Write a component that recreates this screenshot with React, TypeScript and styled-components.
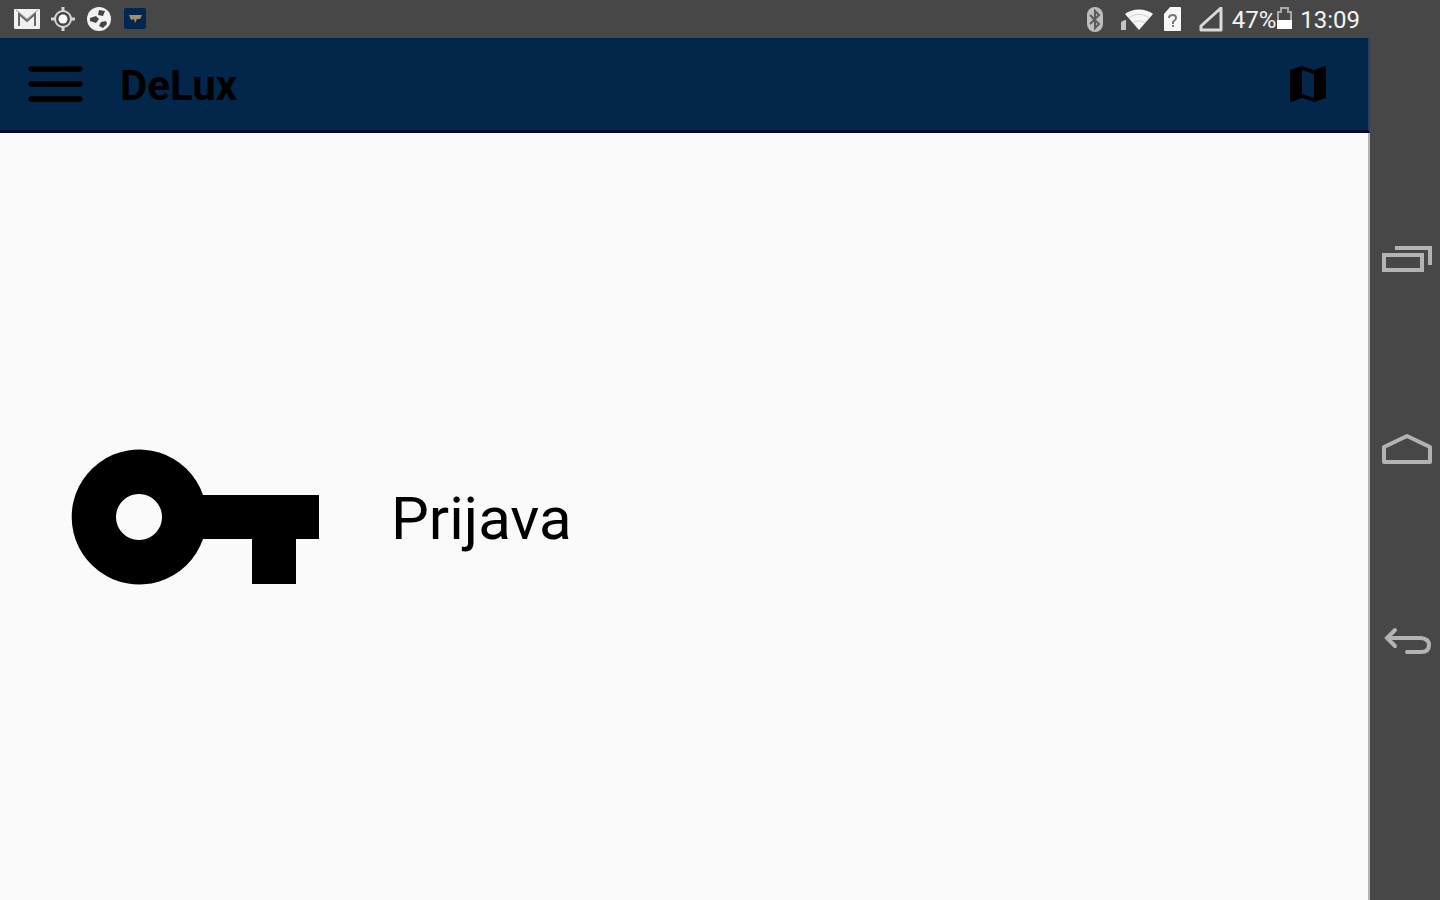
import React from "react";
import styled, { createGlobalStyle } from "styled-components";

const GlobalStyle = createGlobalStyle`
  * { box-sizing: border-box; }
  body {
    margin: 0;
    background: #474748;
    font-family: Roboto, "Noto Sans", sans-serif;
  }
`;

const Screen = styled.div`
  display: flex;
  min-height: 100vh;
  background: #474748;
`;

const AppColumn = styled.div`
  flex: 1;
  min-width: 0;
  display: flex;
  flex-direction: column;
`;

const StatusBar = styled.div`
  display: flex;
  justify-content: space-between;
  align-items: center;
  height: 38px;
  padding: 2px 10px 0 14px;
  color: #f4f4f4;
`;

const Notifications = styled.div`
  display: flex;
  align-items: center;
  gap: 10px;
`;

const SystemStatus = styled.div`
  display: flex;
  align-items: center;
`;

const StatusIcon = styled.svg<{ $gap?: number }>`
  display: block;
  flex: none;
  margin-right: ${(p) => p.$gap ?? 0}px;
`;

const StatusText = styled.span`
  font-size: 24px;
  line-height: 36px;
`;

const AppBar = styled.header`
  display: flex;
  align-items: center;
  height: 95px;
  padding: 0 36px 0 28px;
  background: #03264b;
  border-bottom: 3px solid #020a30;
  border-right: 2px solid #25415f;
`;

const IconButton = styled.button`
  display: flex;
  align-items: center;
  justify-content: center;
  padding: 0;
  border: 0;
  background: transparent;
  color: #000;
  cursor: pointer;
`;

const Title = styled.h1`
  flex: 1;
  margin: 0;
  padding: 4px 0 0 37px;
  font-size: 42px;
  line-height: 48px;
  font-weight: 700;
  color: #000;
`;

const Content = styled.main`
  flex: 1;
  display: flex;
  align-items: center;
  padding: 0 71px;
  background: #fafafa;
  border-right: 2px solid #b4b4b5;
`;

const LoginButton = styled(IconButton)`
  gap: 72px;
  font-family: inherit;
  font-size: 60px;
  line-height: 72px;
`;

const LoginLabel = styled.span`
  padding-top: 4px;
`;

const NavRail = styled.nav`
  flex: none;
  display: flex;
  flex-direction: column;
  justify-content: center;
  width: 70px;
`;

const NavButton = styled(IconButton)`
  height: 191px;
  padding-left: 4px;
`;

const line = { fill: "none", stroke: "#b3b3b4", strokeWidth: 4 };

export default function App() {
  return (
    <>
      <GlobalStyle />
      <Screen>
        <AppColumn>
          <StatusBar>
            <Notifications>
              <StatusIcon width="26" height="26" viewBox="0 0 26 26">
                <rect x="0" y="2" width="26" height="20" rx="1" fill="#f1f1f1" />
                <path d="M5 19V7l8 7 8-7v12" fill="none" stroke="#666" strokeWidth="2" />
                <path d="M2 3l11 9 11-9" fill="none" stroke="#9a9a9a" strokeWidth="1" />
              </StatusIcon>
              <StatusIcon width="26" height="26" viewBox="0 0 26 26">
                <circle cx="13" cy="12" r="8" fill="none" stroke="#d6d6d6" strokeWidth="2" />
                <circle cx="13" cy="12" r="4.500" fill="#fff" />
                <path d="M13 0v5M13 19v5M1 12h5M20 12h5" stroke="#d6d6d6" strokeWidth="3" />
              </StatusIcon>
              <StatusIcon width="26" height="26" viewBox="0 0 26 26">
                <circle cx="13" cy="12" r="12" fill="#f2f2f2" />
                <path d="M13 3l6 1-2 5-5-1zM4 11l6-2 3 3-3 4-6-2zM15 15l5-1 1 3-4 4-4-2z" fill="#444" />
              </StatusIcon>
              <StatusIcon width="26" height="26" viewBox="0 0 26 26">
                <rect x="2" y="1" width="22" height="21" rx="2" fill="#03264f" />
                <path d="M7 8h13l-2 4h-3l-2 4-1-4-3 1z" fill="#a38f62" />
              </StatusIcon>
            </Notifications>
            <SystemStatus>
              <StatusIcon $gap={17} width="18" height="26" viewBox="0 0 18 26">
                <rect x="1" y="0" width="16" height="25" rx="8" fill="#bdbdbd" />
                <path d="M4 8l9 9-4 4V4l4 4-9 9" fill="none" stroke="#5b5b5c" strokeWidth="2" />
              </StatusIcon>
              <StatusIcon $gap={10} width="32" height="26" viewBox="0 0 32 26">
                <path d="M4 7C11 1 25 1 32 7L18 23z" fill="#f7f7f7" />
                <path d="M8 11c6-5 14-5 20 0M12 16c4-3 8-3 12 0" fill="none" stroke="#cfcfcf" />
                <path d="M0 16q0-2 5-3v10H0z" fill="#c4c4c4" />
              </StatusIcon>
              <StatusIcon $gap={16} width="19" height="26" viewBox="0 0 19 26">
                <path d="M7 0h10q1 0 1 1v22q0 1-1 1H2q-1 0-1-1V7z" fill="#f7f7f7" />
                <path d="M6 11q0-3 4-3 3 0 3 3 0 2-3 4v2M10 18v2" fill="none" stroke="#777" strokeWidth="2" />
              </StatusIcon>
              <StatusIcon $gap={8} width="26" height="26" viewBox="0 0 26 26">
                <path d="M23 1v22H3v-4z" fill="none" stroke="#dadada" strokeWidth="3" strokeLinejoin="round" />
              </StatusIcon>
              <StatusText>47%</StatusText>
              <StatusIcon $gap={7} width="17" height="26" viewBox="0 0 17 26">
                <path d="M2 14V5h3V1h7v4h3v9" fill="none" stroke="#a8a8a8" strokeWidth="2" />
                <path d="M1 13h15v9H1z" fill="#fff" />
              </StatusIcon>
              <StatusText>13:09</StatusText>
            </SystemStatus>
          </StatusBar>
          <AppBar>
            <IconButton aria-label="Menu">
              <svg width="55" height="36" viewBox="0 0 55 36">
                <path d="M3 3h49M3 18h49M3 33h49" stroke="#000" strokeWidth="5.500" strokeLinecap="round" />
              </svg>
            </IconButton>
            <Title>DeLux</Title>
            <IconButton aria-label="Map">
              <svg width="48" height="48" viewBox="0 0 24 24">
                <path
                  fill="#000"
                  d="M20.500 3l-.16.030L15 5.100 9 3 3.360 4.900c-.21.070-.36.250-.36.480V20.500c0 .280.220.500.500.500l.160-.030L9 18.900l6 2.100 5.640-1.900c.210-.070.360-.250.360-.480V3.500c0-.280-.220-.500-.500-.500zM15 19l-6-2.110V5l6 2.110V19z"
                />
              </svg>
            </IconButton>
          </AppBar>
          <Content>
            <LoginButton>
              <svg width="248" height="136" viewBox="0 0 248 136">
                <path
                  fill="#000"
                  fillRule="evenodd"
                  d="M132 46H248V90H225V135H181V90H132A67.500 67.500 0 1 1 132 46zM68 45a23 23 0 1 0 .010 0z"
                />
              </svg>
              <LoginLabel>Prijava</LoginLabel>
            </LoginButton>
          </Content>
        </AppColumn>
        <NavRail>
          <NavButton aria-label="Recent apps">
            <svg width="52" height="28" viewBox="0 0 52 28">
              <path {...line} d="M3 10h38v15H3zM14 3h35v17" />
            </svg>
          </NavButton>
          <NavButton aria-label="Home">
            <svg width="52" height="34" viewBox="0 0 52 34">
              <path {...line} d="M3 29V14L26 3l23 11v15z" strokeLinejoin="round" />
            </svg>
          </NavButton>
          <NavButton aria-label="Back">
            <svg width="52" height="28" viewBox="0 0 52 28">
              <path {...line} d="M6 11h34q8 1 8 7 0 7-8 7H26M14 3L6 11l8 8" strokeLinecap="round" />
            </svg>
          </NavButton>
        </NavRail>
      </Screen>
    </>
  );
}
